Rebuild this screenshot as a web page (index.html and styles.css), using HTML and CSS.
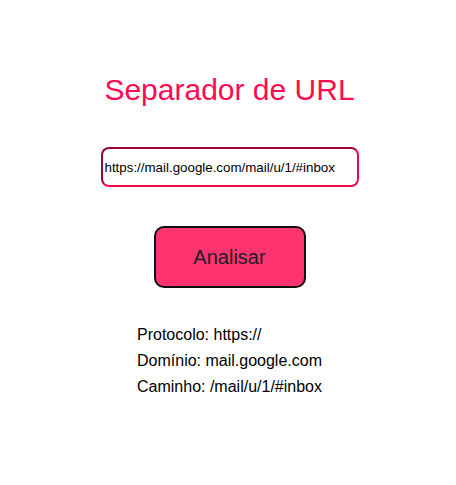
FILE: index.html
```html
<!DOCTYPE html>
<html lang="pt">
<head>
<meta charset="utf-8">
<title>Separador de URL</title>
<link rel="stylesheet" href="styles.css">
</head>
<body>
<main class="app">
  <h1 class="title">Separador de URL</h1>
  <input class="url-input" type="text" value="https://mail.google.com/mail/u/1/#inbox">
  <button class="analyze-btn" type="button">Analisar</button>
  <div class="results">
    <div class="result-line">Protocolo: https://</div>
    <div class="result-line">Domínio: mail.google.com</div>
    <div class="result-line">Caminho: /mail/u/1/#inbox</div>
  </div>
</main>
</body>
</html>
```
FILE: styles.css
```css
html, body {
  margin: 0;
  padding: 0;
  background: #ffffff;
}

body {
  font-family: "Liberation Sans", Arial, sans-serif;
}

.app {
  display: flex;
  flex-direction: column;
  align-items: center;
  padding-top: 73px;
  padding-left: 3px;
}

.title {
  margin: 0;
  font-size: 30px;
  font-weight: normal;
  line-height: 34px;
  color: #ff0a50;
}

.url-input {
  margin-top: 40px;
  box-sizing: border-box;
  width: 258px;
  height: 40px;
  padding: 1px 2px;
  border: 2px inset #f00a4c;
  border-radius: 8px;
  font-family: "Liberation Sans", Arial, sans-serif;
  font-size: 13.333px;
  color: #000;
  background: #fff;
  outline: none;
}

.analyze-btn {
  margin-top: 39px;
  box-sizing: border-box;
  width: 152px;
  height: 62px;
  background: #ff3370;
  border: 2px solid #111111;
  border-radius: 10px;
  font-family: "Liberation Sans", Arial, sans-serif;
  font-size: 20px;
  color: #1c1c2a;
  cursor: pointer;
}

.results {
  margin-top: 34px;
  font-size: 16px;
  line-height: 26px;
  color: #000;
}
```
